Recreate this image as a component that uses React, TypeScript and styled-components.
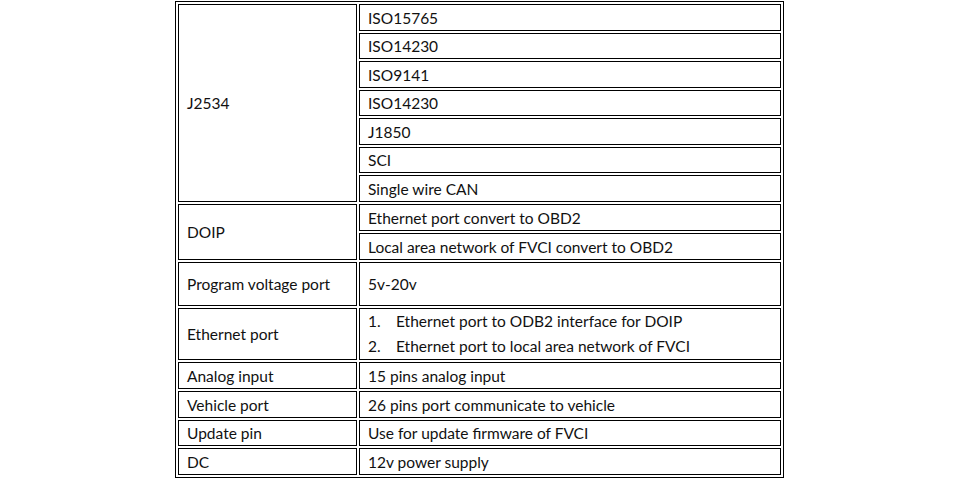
import React from 'react';
import styled, { createGlobalStyle } from 'styled-components';

const GlobalStyle = createGlobalStyle`
  html, body {
    margin: 0;
    padding: 0;
    background: #fff;
  }
  body {
    font-family: Lato, "Liberation Sans", sans-serif;
    color: #000;
  }
`;

const Page = styled.div`
  width: 960px;
  height: 482px;
  overflow: hidden;
  padding: 1px 0 0 175px;
  box-sizing: border-box;
`;

const SpecTable = styled.table`
  border: 1px solid #000;
  border-collapse: separate;
  border-spacing: 2px;
  table-layout: fixed;
  width: 609px;
`;

const Cell = styled.td<{ $h?: number; $w?: number }>`
  box-sizing: border-box;
  border: 1px solid #000;
  padding: 0 0 0 8px;
  vertical-align: middle;
  font-size: 15.5px;
  line-height: 18px;
  white-space: nowrap;
  color: #111;
  ${({ $w }) => ($w ? `width: ${$w}px;` : '')}
  ${({ $h }) => ($h ? `height: ${$h}px;` : '')}
`;

const NumList = styled.ol`
  margin: 0;
  padding: 0;
  list-style: none;
`;

const NumItem = styled.li`
  display: flex;
  line-height: 25px;
  span:first-child {
    width: 28px;
    flex: none;
  }
`;

type Row = { label?: string; span?: number; value: React.ReactNode; h: number };

const rows: Row[] = [
  { label: 'J2534', span: 7, value: 'ISO15765', h: 27 },
  { value: 'ISO14230', h: 26 },
  { value: 'ISO9141', h: 27 },
  { value: 'ISO14230', h: 26 },
  { value: 'J1850', h: 27 },
  { value: 'SCI', h: 26 },
  { value: 'Single wire CAN', h: 27 },
  { label: 'DOIP', span: 2, value: 'Ethernet port convert to OBD2', h: 27 },
  { value: 'Local area network of FVCI convert to OBD2', h: 27 },
  { label: 'Program voltage port', value: '5v-20v', h: 44 },
  {
    label: 'Ethernet port',
    value: (
      <NumList>
        <NumItem>
          <span>1.</span>
          <span>Ethernet port to ODB2 interface for DOIP</span>
        </NumItem>
        <NumItem>
          <span>2.</span>
          <span>Ethernet port to local area network of FVCI</span>
        </NumItem>
      </NumList>
    ),
    h: 52,
  },
  { label: 'Analog input', value: '15 pins analog input', h: 27 },
  { label: 'Vehicle port', value: '26 pins port communicate to vehicle', h: 27 },
  { label: 'Update pin', value: 'Use for update firmware of FVCI', h: 26 },
  { label: 'DC', value: '12v power supply', h: 27 },
];

const App: React.FC = () => (
  <>
    <GlobalStyle />
    <Page>
      <SpecTable>
        <tbody>
          {rows.map((r, i) => (
            <tr key={i}>
              {r.label && (
                <Cell $w={179} rowSpan={r.span}>
                  {r.label}
                </Cell>
              )}
              <Cell $w={i === 0 ? 422 : undefined} $h={r.h}>
                {r.value}
              </Cell>
            </tr>
          ))}
        </tbody>
      </SpecTable>
    </Page>
  </>
);

export default App;
